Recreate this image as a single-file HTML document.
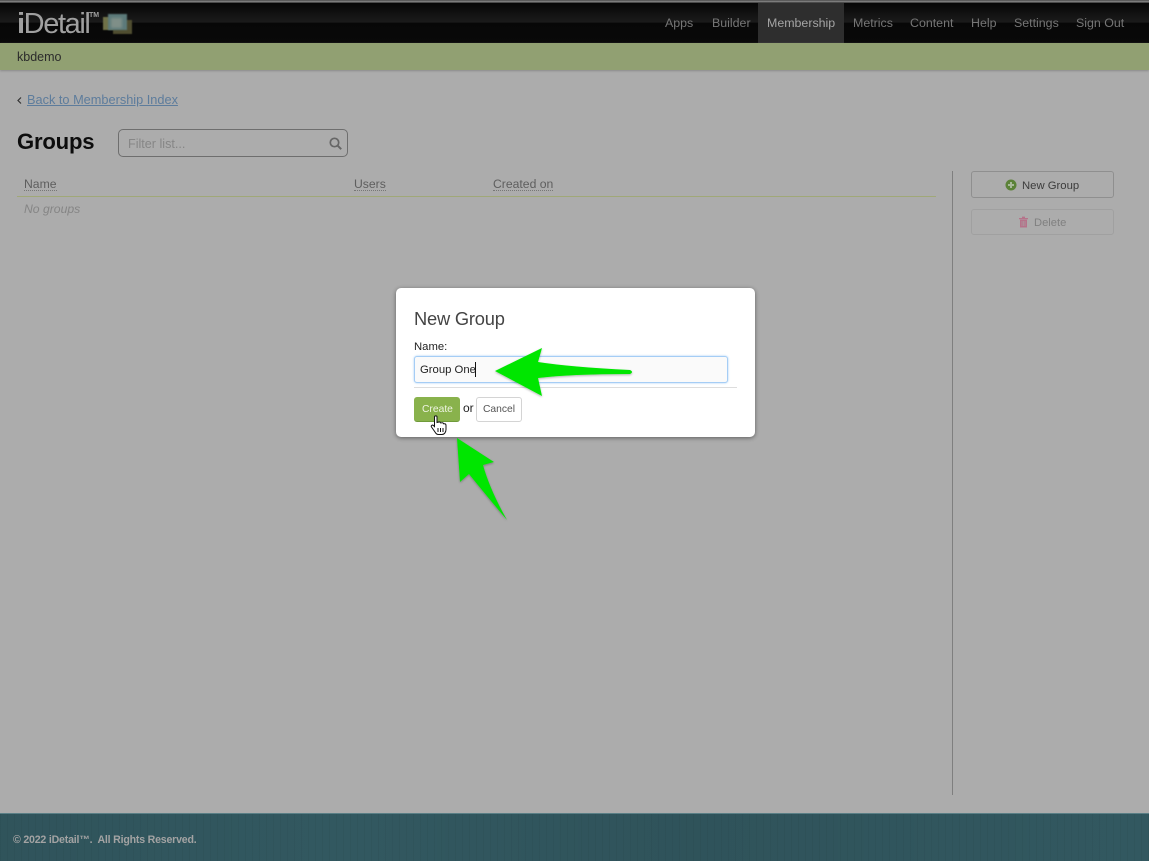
<!DOCTYPE html>
<html><head><meta charset="utf-8"><title>Groups</title>
<style>
html,body{margin:0;padding:0}
body{width:1149px;height:861px;position:relative;overflow:hidden;background:#acacac;font-family:"Liberation Sans",sans-serif}
.a{position:absolute;white-space:nowrap}
.nav{top:15px;font-size:12.4px;line-height:16px;color:#767676}
.th{top:176px;font-size:12.2px;line-height:16px;color:#5e5e5e;border-bottom:1px dotted #777;height:14px}
</style></head><body>
<div class="a" style="left:0;top:0;width:1149px;height:3px;background:linear-gradient(#3a3a3a,#8a8a8a 40%,#333)"></div>
<div class="a" style="left:0;top:3px;width:1149px;height:40px;background:linear-gradient(#060606,#1b1b1b 48%,#070707 50%,#090909)"></div>
<div class="a" style="left:758px;top:3px;width:86px;height:40px;background:#2e2e2e"></div>
<div class="a" style="left:17px;top:8px;font-size:29px;line-height:32px;color:#a0a0a0;letter-spacing:-1.4px"><b>i</b>Detail</div>
<div class="a" style="left:89px;top:12px;font-size:7px;line-height:8px;color:#a0a0a0;font-weight:bold">TM</div>
<div class="a" style="left:103px;top:17px;width:19px;height:13px;background:#6f7148;filter:blur(.5px)"></div>
<div class="a" style="left:113px;top:20px;width:19px;height:14px;background:#4f4d30;filter:blur(.5px)"></div>
<div class="a" style="left:108px;top:14px;width:19px;height:16px;background:#5c7a7a;filter:blur(.8px)"></div>
<div class="a" style="left:111px;top:18px;width:11px;height:10px;background:#7f8f88;filter:blur(1.2px)"></div>
<div class="a nav" style="left:665px">Apps</div>
<div class="a nav" style="left:712px">Builder</div>
<div class="a nav" style="left:767px;color:#a4a4a4">Membership</div>
<div class="a nav" style="left:853px">Metrics</div>
<div class="a nav" style="left:910px">Content</div>
<div class="a nav" style="left:971px">Help</div>
<div class="a nav" style="left:1014px">Settings</div>
<div class="a nav" style="left:1076px">Sign Out</div>

<div class="a" style="left:0;top:43px;width:1149px;height:27px;background:#91a072;box-shadow:0 1px 2px #8a8a8a"></div>
<div class="a" style="left:17px;top:49px;font-size:12.5px;line-height:16px;color:#2b2b2b">kbdemo</div>

<svg class="a" style="left:16px;top:96px" width="7" height="9" viewBox="0 0 7 9"><path d="M5 1.5 L2 4.5 L5 7.5" fill="none" stroke="#333" stroke-width="1.2"/></svg>
<div class="a" style="left:27px;top:92px;font-size:12.75px;line-height:16px;color:#5d7c9c;text-decoration:underline">Back to Membership Index</div>

<div class="a" style="left:17px;top:128px;font-size:22.1px;line-height:27px;font-weight:bold;color:#0d0d0d;letter-spacing:-.2px">Groups</div>
<div class="a" style="left:118px;top:129px;width:228px;height:26px;border:1px solid #6e6e6e;border-radius:5px"></div>
<div class="a" style="left:128px;top:136px;font-size:12.6px;line-height:16px;color:#868686">Filter list...</div>
<svg class="a" style="left:328px;top:136px" width="15" height="15" viewBox="0 0 15 15"><circle cx="6.5" cy="6.5" r="4.2" fill="none" stroke="#666" stroke-width="1.7"/><path d="M9.6 9.6 L13.2 13.2" stroke="#666" stroke-width="2"/></svg>

<div class="a th" style="left:24px">Name</div>
<div class="a th" style="left:354px">Users</div>
<div class="a th" style="left:493px">Created on</div>
<div class="a" style="left:17px;top:196px;width:919px;height:1px;background:#a0a878"></div>
<div class="a" style="left:24px;top:201px;font-size:12.2px;line-height:16px;color:#858585;font-style:italic">No groups</div>

<div class="a" style="left:952px;top:171px;width:1px;height:624px;background:#7f7f7f"></div>
<div class="a" style="left:971px;top:171px;width:141px;height:25px;border:1px solid #8f8f8f;border-radius:3px"></div>
<svg class="a" style="left:1005px;top:179px" width="12" height="12" viewBox="0 0 12 12"><circle cx="6" cy="6" r="5.5" fill="#5b8238"/><path d="M6 3V9M3 6H9" stroke="#a8b89a" stroke-width="2"/></svg>
<div class="a" style="left:1022px;top:179px;font-size:11.3px;line-height:14px;color:#3c3c3c">New Group</div>
<div class="a" style="left:971px;top:209px;width:141px;height:24px;border:1px solid #a0a0a0;border-radius:3px"></div>
<svg class="a" style="left:1018px;top:216px" width="11" height="12" viewBox="0 0 11 12"><path d="M1 2H10V3.2H1ZM4 .6H7V2H4ZM2 3.6H9V11.5H2Z" fill="#b5738a"/><path d="M4 5V10M5.5 5V10M7 5V10" stroke="#a8a0a3" stroke-width=".6"/></svg>
<div class="a" style="left:1034px;top:216px;font-size:11.2px;line-height:14px;color:#808080">Delete</div>

<div class="a" style="left:0;top:813px;width:1149px;height:48px;background:#325860;border-top:1px solid #5a7f86;box-sizing:border-box;background-image:repeating-linear-gradient(90deg,rgba(0,0,0,.04) 0 1px,transparent 1px 7px),linear-gradient(90deg,rgba(0,0,0,.05),transparent 30%,rgba(0,0,0,.06) 60%,transparent)"></div>
<div class="a" style="left:13px;top:833px;font-size:10.6px;line-height:14px;color:#a3a3a3;font-weight:bold;letter-spacing:-.2px">© 2022 iDetail™.&nbsp; All Rights Reserved.</div>

<div class="a" style="left:396px;top:288px;width:359px;height:149px;background:#fff;border-radius:5px;box-shadow:0 1px 4px rgba(0,0,0,.45)"></div>
<div class="a" style="left:414px;top:307px;font-size:18.3px;line-height:23px;color:#444;letter-spacing:-.2px">New Group</div>
<div class="a" style="left:414px;top:340px;font-size:11.3px;line-height:14px;color:#222">Name:</div>
<div class="a" style="left:414px;top:356px;width:312px;height:25px;background:#fafafa;border:1px solid #a5cdf5;border-radius:3px;box-shadow:0 0 2px #a5cdf5"></div>
<div class="a" style="left:420px;top:363px;font-size:11.3px;line-height:14px;color:#222">Group One</div>
<div class="a" style="left:475px;top:362px;width:1px;height:15px;background:#111"></div>
<div class="a" style="left:414px;top:387px;width:323px;height:1px;background:#ddd"></div>
<div class="a" style="left:414px;top:397px;width:46px;height:25px;background:#89b24c;border-radius:3px;border-bottom:1px solid #6f9a3a;box-sizing:border-box"></div>
<div class="a" style="left:422px;top:403px;font-size:10.3px;line-height:13px;color:#eef4e2">Create</div>
<div class="a" style="left:463px;top:401px;font-size:12px;line-height:14px;color:#222">or</div>
<div class="a" style="left:476px;top:397px;width:44px;height:23px;border:1px solid #d4d4d4;border-radius:3px;background:#fff"></div>
<div class="a" style="left:483px;top:403px;font-size:10.3px;line-height:13px;color:#555">Cancel</div>

<svg class="a" style="left:0;top:0;pointer-events:none" width="1149" height="861" viewBox="0 0 1149 861"><defs><filter id="s" x="-10%" y="-10%" width="130%" height="130%"><feDropShadow dx="0" dy="1" stdDeviation="1" flood-color="#000" flood-opacity=".3"/></filter></defs><path d="M495 371 L542 348 L538 362 Q570 367 630 370 Q634 372 630 374 Q570 374 538 378 L542 396 Z" fill="#00e600" filter="url(#s)"/><path d="M457 438 L494 462 L483 465 Q490 490 507 520 Q490 500 469 474 L460 482 Z" fill="#00e600" filter="url(#s)"/></svg>

<svg class="a" style="left:430px;top:415px" width="17" height="21" viewBox="0 0 17 21"><path d="M4.5 2C4.5 .5 7 .5 7 2V7.5L9 7C10 6.8 10.5 7.3 10.7 8L12 7.8C13 7.7 13.4 8.2 13.5 8.8L14.5 8.8C15.6 8.8 16 9.6 16 10.5V14.5C16 17 14.5 19.5 12 19.5H8.5C6.5 19.5 5.8 18.5 5 17L1.5 12C.6 10.6 2.4 9.5 3.4 10.5L4.5 11.6Z" fill="#fff" stroke="#111" stroke-width="1"/><path d="M8 13V17M10.5 13V17M13 13V17" stroke="#111" stroke-width="1"/></svg>
</body></html>
